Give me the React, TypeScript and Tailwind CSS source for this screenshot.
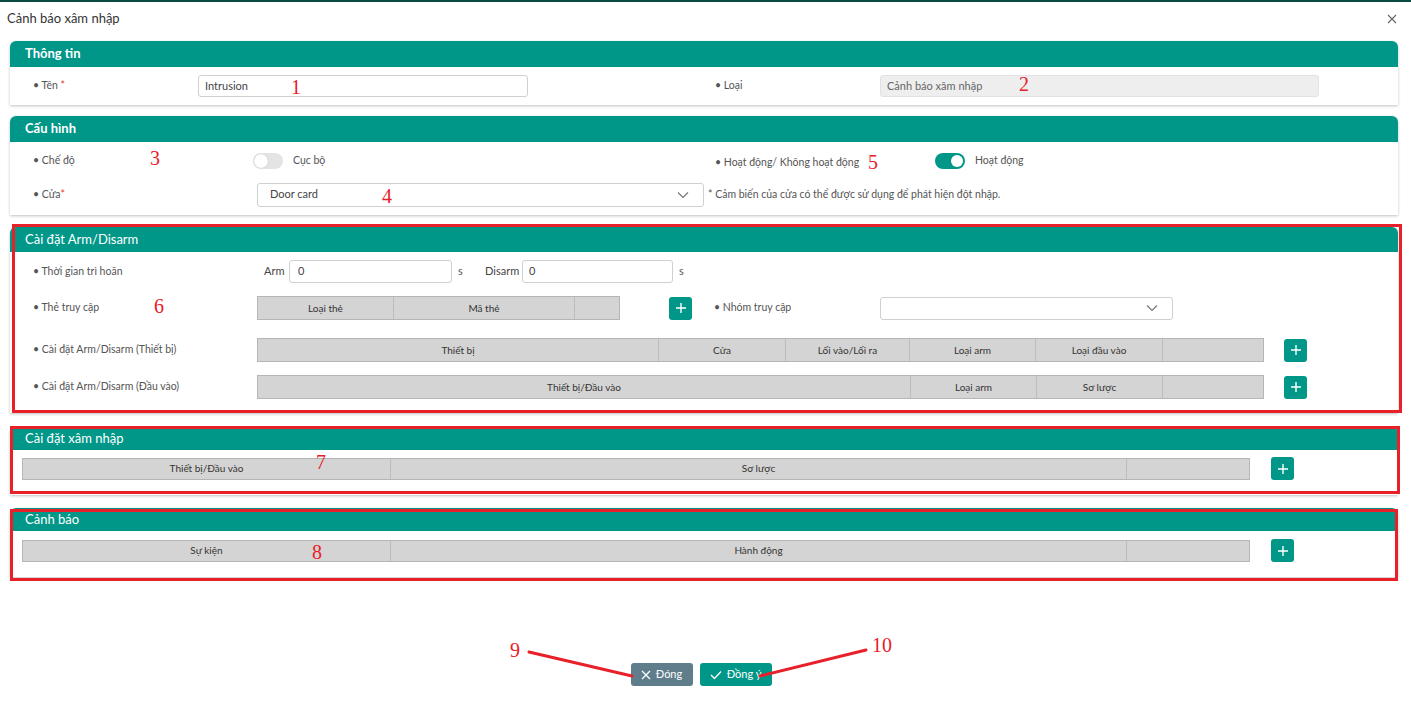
import React from "react";

const F = { fontFamily: "Lato, 'Noto Sans', sans-serif" };

function Plus({ className = "" }: { className?: string }) {
  return (
    <div className={`w-[23px] h-[23px] rounded-[3px] bg-[#009688] flex items-center justify-center shrink-0 ${className}`}>
      <svg width="12" height="12" viewBox="0 0 12 12"><path d="M6 1v10M1 6h10" stroke="white" strokeWidth="1.4" /></svg>
    </div>
  );
}

function Chevron() {
  return (
    <svg width="12" height="8" viewBox="0 0 12 8"><path d="M1 1.5l5 5 5-5" fill="none" stroke="#777" strokeWidth="1.2" /></svg>
  );
}

function Toggle({ on }: { on: boolean }) {
  return on ? (
    <div className="w-[30px] h-[16px] rounded-full bg-[#009688] relative shrink-0">
      <div className="absolute right-[2px] top-[2px] w-[12px] h-[12px] rounded-full bg-white" />
    </div>
  ) : (
    <div className="w-[30px] h-[16px] rounded-full bg-[#e4e4e4] relative shrink-0">
      <div className="absolute left-[1px] top-[1px] w-[14px] h-[14px] rounded-full bg-white shadow-[0_0_1px_rgba(0,0,0,0.3)]" />
    </div>
  );
}

function Card({ title, bold, headerH, children }: { title: string; bold?: boolean; headerH: string; children: React.ReactNode }) {
  return (
    <div className="ml-[10px] mr-[13px] rounded-t-[6px] bg-white shadow-[0_1px_3px_rgba(0,0,0,0.25)]">
      <div className={`${headerH} bg-[#009688] rounded-t-[6px] flex items-center pl-[15px] text-white text-[13px] ${bold ? "font-bold" : ""}`}>
        {title}
      </div>
      {children}
    </div>
  );
}

function Table({ cols, className = "" }: { cols: { label: string; w: string }[]; className?: string }) {
  return (
    <div className={`flex bg-[#d4d4d4] border border-[#b5b5b5] text-[10px] text-[#333] ${className}`}>
      {cols.map((c, i) => (
        <div key={i} className={`${c.w} flex items-center justify-center ${i < cols.length - 1 ? "border-r border-[#bdbdbd]" : ""}`}>
          {c.label}
        </div>
      ))}
    </div>
  );
}

const Lbl = ({ children, className = "" }: { children: React.ReactNode; className?: string }) => (
  <div className={`text-[10.5px] text-[#555] shrink-0 ${className}`}>• {children}</div>
);

function Num({ n, x, y }: { n: string; x: number; y: number }) {
  return (
    <div
      className="absolute text-[#e8202a] text-[20px] leading-none"
      style={{ left: x, top: y, fontFamily: "'Liberation Serif', serif" }}
    >
      {n}
    </div>
  );
}

export default function App() {
  return (
    <div className="relative w-[1411px] h-[704px] bg-white overflow-hidden" style={F}>
      <div className="h-[2px] bg-[#0b4a40]" />
      <div className="h-[39px] flex items-center justify-between pl-[7px] pr-[14px]">
        <div className="text-[13px] text-[#333] -mt-[6px]">Cảnh báo xâm nhập</div>
        <svg width="10" height="10" viewBox="0 0 10 10" className="-mt-[6px]"><path d="M1 1l8 8M9 1l-8 8" stroke="#666" strokeWidth="1.1" /></svg>
      </div>

      {/* Thông tin */}
      <Card title="Thông tin" bold headerH="h-[26px]">
        <div className="h-[38px] flex items-center pl-[23px] rounded-b-[4px]">
          <Lbl className="w-[165px]">Tên <span className="text-[#e53935]">*</span></Lbl>
          <div className="w-[330px] h-[22px] border border-[#d0d0d0] rounded-[3px] flex items-center pl-[6px] text-[11px] text-[#444]">Intrusion</div>
          <div className="w-[187px]" />
          <Lbl className="w-[165px]">Loại</Lbl>
          <div className="w-[439px] h-[22px] bg-[#eeeeee] border border-[#e2e2e2] rounded-[3px] flex items-center pl-[6px] text-[11px] text-[#666]">Cảnh báo xâm nhập</div>
        </div>
      </Card>

      <div className="h-[11px]" />

      {/* Cấu hình */}
      <Card title="Cấu hình" bold headerH="h-[26px]">
        <div className="pl-[23px] pt-[11px] pb-[8px]">
          <div className="flex items-center h-[15px]">
            <Lbl className="w-[220px]">Chế độ</Lbl>
            <Toggle on={false} />
            <div className="ml-[10px] text-[10.5px] text-[#555] w-[422px]">Cục bộ</div>
            <Lbl className="w-[220px] mt-[4px]">Hoạt động/ Không hoạt động</Lbl>
            <Toggle on />
            <div className="ml-[10px] text-[10.5px] text-[#555]">Hoạt động</div>
          </div>
          <div className="flex items-center mt-[15px]">
            <Lbl className="w-[224px]">Cửa<span className="text-[#e53935]">*</span></Lbl>
            <div className="w-[447px] h-[24px] border border-[#d0d0d0] rounded-[3px] flex items-center justify-between pl-[12px] pr-[14px] text-[11px] text-[#444]">
              <span className="-mt-[2px]">Door card</span>
              <Chevron />
            </div>
            <div className="ml-[4px] text-[10.5px] text-[#555]">* Cảm biến của cửa có thể được sử dụng để phát hiện đột nhập.</div>
          </div>
        </div>
      </Card>

      <div className="h-[12px]" />

      {/* Arm/Disarm */}
      <Card title="Cài đặt Arm/Disarm" headerH="h-[25px]">
        <div className="pl-[23px] pt-[8px] pb-[14px]">
          <div className="flex items-center h-[23px]">
            <Lbl className="w-[231px]">Thời gian trì hoãn</Lbl>
            <div className="text-[11px] text-[#444] w-[25px]">Arm</div>
            <div className="w-[163px] h-[23px] border border-[#d0d0d0] rounded-[3px] flex items-center pl-[8px] text-[11px] text-[#444]">0</div>
            <div className="text-[11px] text-[#555] ml-[6px] w-[27px]">s</div>
            <div className="text-[11px] text-[#444] w-[37px]">Disarm</div>
            <div className="w-[151px] h-[23px] border border-[#d0d0d0] rounded-[3px] flex items-center pl-[6px] text-[11px] text-[#444]">0</div>
            <div className="text-[11px] text-[#555] ml-[6px]">s</div>
          </div>
          <div className="flex items-center mt-[13px] h-[24px]">
            <Lbl className="w-[224px]">Thẻ truy cập</Lbl>
            <Table className="h-[24px] w-[363px]" cols={[{ label: "Loại thẻ", w: "w-[136px]" }, { label: "Mã thẻ", w: "w-[181px]" }, { label: "", w: "flex-1" }]} />
            <Plus className="ml-[49px]" />
            <Lbl className="ml-[22px] w-[166px]">Nhóm truy cập</Lbl>
            <div className="w-[293px] h-[23px] border border-[#d0d0d0] rounded-[3px] flex items-center justify-end pr-[14px]">
              <Chevron />
            </div>
          </div>
          <div className="flex items-center mt-[18px] h-[24px]">
            <Lbl className="w-[224px]">Cài đặt Arm/Disarm (Thiết bị)</Lbl>
            <Table
              className="h-[24px] w-[1007px]"
              cols={[
                { label: "Thiết bị", w: "w-[401px]" },
                { label: "Cửa", w: "w-[127px]" },
                { label: "Lối vào/Lối ra", w: "w-[124px]" },
                { label: "Loại arm", w: "w-[126px]" },
                { label: "Loại đầu vào", w: "w-[127px]" },
                { label: "", w: "flex-1" },
              ]}
            />
            <Plus className="ml-[20px]" />
          </div>
          <div className="flex items-center mt-[13px] h-[24px]">
            <Lbl className="w-[224px]">Cài đặt Arm/Disarm (Đầu vào)</Lbl>
            <Table
              className="h-[24px] w-[1007px]"
              cols={[
                { label: "Thiết bị/Đầu vào", w: "w-[653px]" },
                { label: "Loại arm", w: "w-[126px]" },
                { label: "Sơ lược", w: "w-[126px]" },
                { label: "", w: "flex-1" },
              ]}
            />
            <Plus className="ml-[20px]" />
          </div>
        </div>
      </Card>

      <div className="h-[14px]" />

      {/* Cài đặt xâm nhập */}
      <Card title="Cài đặt xâm nhập" headerH="h-[23px]">
        <div className="flex items-center pl-[12px] pt-[7px] pb-[15px]">
          <Table
            className="h-[22px] w-[1228px]"
            cols={[
              { label: "Thiết bị/Đầu vào", w: "w-[368px]" },
              { label: "Sơ lược", w: "w-[736px]" },
              { label: "", w: "flex-1" },
            ]}
          />
          <Plus className="ml-[21px]" />
        </div>
      </Card>

      <div className="h-[13px]" />

      {/* Cảnh báo */}
      <Card title="Cảnh báo" headerH="h-[23px]">
        <div className="flex items-center pl-[12px] pt-[8px] pb-[15px]">
          <Table
            className="h-[22px] w-[1228px]"
            cols={[
              { label: "Sự kiện", w: "w-[368px]" },
              { label: "Hành động", w: "w-[736px]" },
              { label: "", w: "flex-1" },
            ]}
          />
          <Plus className="ml-[21px]" />
        </div>
      </Card>

      {/* Footer buttons */}
      <div className="absolute left-0 right-0 top-[663px] flex justify-center gap-[7px] pr-[9px]">
        <div className="w-[62px] h-[23px] rounded-[3px] bg-[#607d8b] flex items-center justify-center gap-[5px] text-white text-[11px]">
          <svg width="10" height="10" viewBox="0 0 10 10"><path d="M1 1l8 8M9 1l-8 8" stroke="white" strokeWidth="1.3" /></svg>
          Đóng
        </div>
        <div className="w-[72px] h-[23px] rounded-[3px] bg-[#009688] flex items-center justify-center gap-[5px] text-white text-[11px]">
          <svg width="12" height="10" viewBox="0 0 12 10"><path d="M1 5l3.5 3.5L11 1.5" fill="none" stroke="white" strokeWidth="1.3" /></svg>
          Đồng ý
        </div>
      </div>

      {/* Annotations */}
      <div className="absolute left-[12px] top-[224px] w-[1390px] h-[189px] border-[3px] border-[#e8202a] pointer-events-none" />
      <div className="absolute left-[10px] top-[426px] w-[1390px] h-[68px] border-[3px] border-[#e8202a] pointer-events-none" />
      <div className="absolute left-[10px] top-[509px] w-[1388px] h-[72px] border-[3px] border-[#e8202a] pointer-events-none" />

      <Num n="1" x={291} y={77} />
      <Num n="2" x={1019} y={74} />
      <Num n="3" x={150} y={148} />
      <Num n="4" x={382} y={186} />
      <Num n="5" x={868} y={152} />
      <Num n="6" x={154} y={296} />
      <Num n="7" x={316} y={452} />
      <Num n="8" x={312} y={542} />
      <Num n="9" x={510} y={640} />
      <Num n="10" x={872} y={635} />

      <svg className="absolute left-0 top-0 pointer-events-none" width="1411" height="704">
        <line x1="529" y1="652" x2="632" y2="676" stroke="#e8202a" strokeWidth="3" strokeLinecap="round" />
        <line x1="760" y1="676" x2="866" y2="650" stroke="#e8202a" strokeWidth="3" strokeLinecap="round" />
      </svg>
    </div>
  );
}
